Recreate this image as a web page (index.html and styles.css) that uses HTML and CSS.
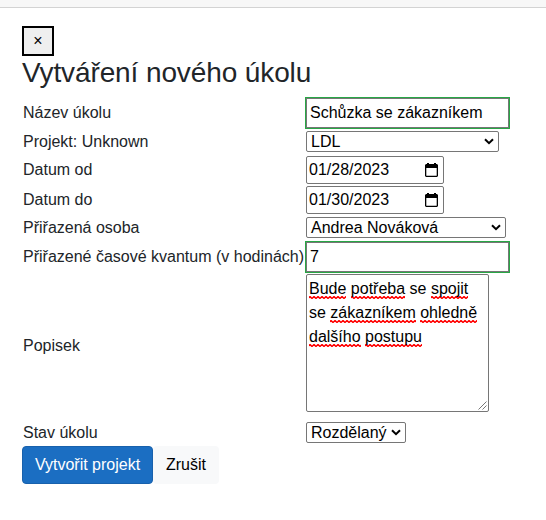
FILE: index.html
```html
<!DOCTYPE html>
<html lang="cs">
<head>
<meta charset="utf-8">
<title>Vytváření nového úkolu</title>
<link rel="stylesheet" href="styles.css">
</head>
<body>
<div class="topbar"></div>
<main class="dialog">
<button class="close" type="button">×</button>
<h3 class="title">Vytváření nového úkolu</h3>
<form class="form">
<div class="row row-input"><label>Název úkolu</label><div class="control input valid">Schůzka se zákazníkem</div></div>
<div class="row row-project"><label>Projekt: Unknown</label><div class="control select project"><span>LDL</span><svg class="chevron" viewBox="0 0 10 7"><path d="M1 1.2 5 5.2 9 1.2"/></svg></div></div>
<div class="row row-date"><label>Datum od</label><div class="control date"><span>01/28/2023</span><svg class="calendar" viewBox="0 0 13 14"><path d="M2 0h2v1h5V0h2v1h1l1 1v11l-1 1H1l-1-1V2l1-1h1zM1.3 5v7.7h10.4V5z"/></svg></div></div>
<div class="row row-date"><label>Datum do</label><div class="control date"><span>01/30/2023</span><svg class="calendar" viewBox="0 0 13 14"><path d="M2 0h2v1h5V0h2v1h1l1 1v11l-1 1H1l-1-1V2l1-1h1zM1.3 5v7.7h10.4V5z"/></svg></div></div>
<div class="row row-person"><label>Přiřazená osoba</label><div class="control select person"><span>Andrea Nováková</span><svg class="chevron" viewBox="0 0 10 7"><path d="M1 1.2 5 5.2 9 1.2"/></svg></div></div>
<div class="row row-input"><label>Přiřazené časové kvantum (v hodinách)</label><div class="control input valid">7</div></div>
<div class="row row-text"><label>Popisek</label><div class="control textarea"><span class="sp">Bude</span> <span class="sp">potřeba</span> se <span class="sp">spojit</span><br>se <span class="sp">zákazníkem</span> <span class="sp">ohledně</span><br><span class="sp">dalšího</span> <span class="sp">postupu</span><svg class="grip" viewBox="0 0 9 9"><path d="M0.5 8.5 8.5 0.5M4.5 8.5 8.5 4.5"/></svg></div></div>
<div class="row row-state"><label>Stav úkolu</label><div class="control select state"><span>Rozdělaný</span><svg class="chevron" viewBox="0 0 10 7"><path d="M1 1.2 5 5.2 9 1.2"/></svg></div></div>
<div class="actions"><button class="btn primary" type="button">Vytvořit projekt</button><button class="btn light" type="button">Zrušit</button></div>
</form>
</main>
</body>
</html>
```
FILE: styles.css
```css
* { box-sizing: border-box; }
body {
  margin: 0;
  background: #fff;
  color: #212529;
  font: 16px/24px "Liberation Sans", Arial, sans-serif;
}
.topbar { height: 8px; background: #f7f7f7; border-bottom: 1px solid #d3d3d3; }
.dialog { padding: 18px 22px 0; }
.close {
  display: block;
  width: 32px;
  height: 30px;
  padding: 0;
  border: 2px solid #000;
  background: #efefef;
  color: #000;
  font: 16px "Liberation Sans", Arial, sans-serif;
}
.title { margin: 0 0 7px; font-size: 28px; line-height: 34px; font-weight: 400; letter-spacing: -0.11px; }
.row { display: flex; align-items: flex-start; }
.row label { width: 284px; padding-left: 1px; white-space: nowrap; flex: none; }
.control { color: #000; background: #fff; white-space: nowrap; flex: none; }
.row-input { height: 34px; }
.row-input label { line-height: 31px; }
.input {
  width: 205px;
  height: 32px;
  margin-left: -1px;
  padding: 1px 4px;
  border: 1px solid #28a745;
  box-shadow: inset 0 0 0 1px #767676;
  line-height: 28px;
}
.select, .date { display: flex; align-items: center; justify-content: space-between; border: 1px solid #767676; border-radius: 2px; }
.select { height: 21px; padding: 0 4px; line-height: 19px; }
.project { width: 193px; }
.person { width: 200px; }
.state { width: 100px; }
.chevron { width: 10px; height: 7px; fill: none; stroke: #000; stroke-width: 2; }
.row-project { height: 25px; }
.row-project label { line-height: 21px; }
.row-date { height: 30px; }
.row-date label { line-height: 28px; }
.date { width: 138px; height: 28px; padding: 0 5px 0 2px; }
.calendar { width: 13px; height: 14px; fill: #000; fill-rule: evenodd; }
.row-person { height: 25px; padding-top: 1px; }
.row-person label { line-height: 21px; }
.row-text { height: 147px; margin-top: -1px; }
.row-text label { line-height: 143px; }
.textarea {
  position: relative;
  width: 183px;
  height: 138px;
  padding: 2px;
  border: 1px solid #767676;
  border-radius: 2px;
}
.sp {
  padding-bottom: 2px;
  background: url("data:image/svg+xml,%3Csvg xmlns='http://www.w3.org/2000/svg' width='4' height='3'%3E%3Cpath d='M-1 2.5 1 .5 3 2.5 5 .5' fill='none' stroke='red' stroke-width='1.5'/%3E%3C/svg%3E") 0 100% repeat-x;
}
.grip { position: absolute; right: 1px; bottom: 1px; width: 9px; height: 9px; fill: none; stroke: #777; }
.row-state { height: 25px; padding-top: 1px; }
.row-state label { line-height: 21px; }
.actions { display: flex; }
.btn { height: 38px; padding: 0; border: 1px solid transparent; border-radius: 4px; font: inherit; }
.primary { width: 131px; background: #1b6ec2; border-color: #1861ac; color: #fff; }
.light { width: 66px; background: #f8f9fa; color: #000; }
```
